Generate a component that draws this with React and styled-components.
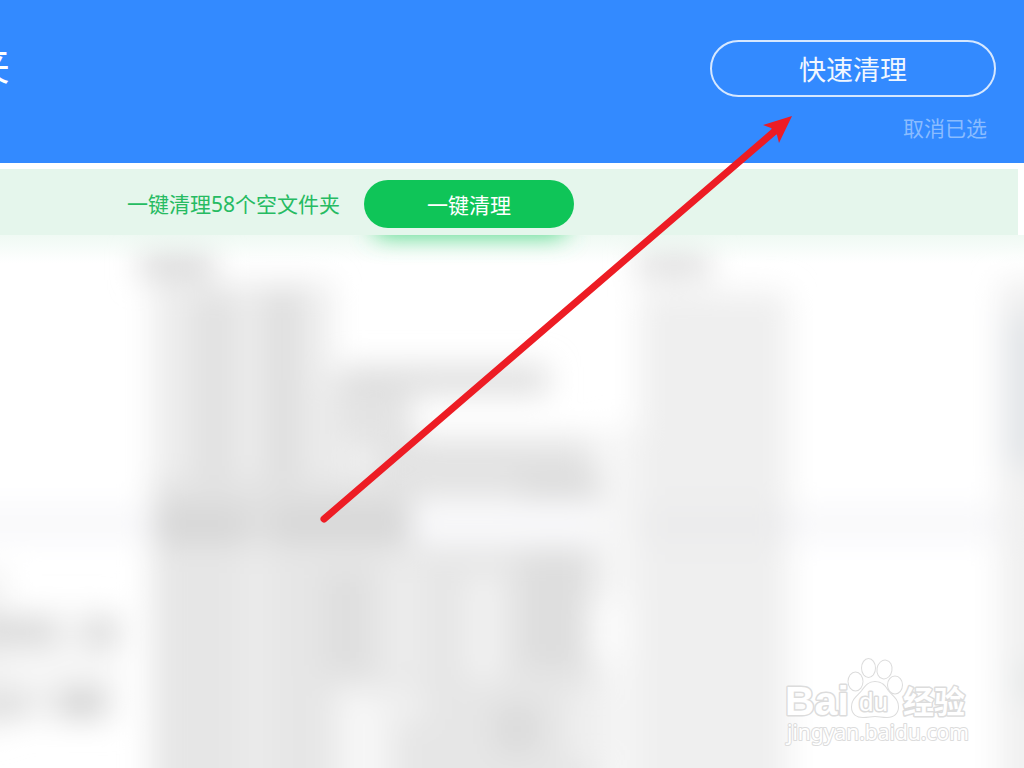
import React from "react";
import styled, { createGlobalStyle } from "styled-components";

const GlobalStyle = createGlobalStyle`
  * {
    box-sizing: border-box;
  }

  body {
    margin: 0;
    background: #fff;
    font-family: "Noto Sans", "Noto Sans CJK SC", sans-serif;
    font-weight: 400;
  }
`;

const Page = styled.div`
  position: relative;
  display: flex;
  flex-direction: column;
  min-height: 100vh;
  overflow: hidden;
`;

const Header = styled.header`
  display: flex;
  justify-content: space-between;
  align-items: flex-start;
  height: 163px;
  padding: 40px 28px 0 0;
  background: #338aff;
  color: #fff;
`;

const Title = styled.h1`
  display: flex;
  justify-content: flex-end;
  width: 10px;
  margin: 0;
  overflow: hidden;
  font-size: 40px;
  font-weight: 400;
  line-height: 50px;
`;

const Actions = styled.div`
  display: flex;
  flex-direction: column;
  align-items: flex-end;
  gap: 16px;
`;

const QuickCleanButton = styled.button`
  width: 286px;
  height: 57px;
  padding: 0;
  border: 2px solid rgba(255, 255, 255, 0.8);
  border-radius: 29px;
  background: transparent;
  color: #f1f7ff;
  font: inherit;
  font-size: 27px;
  cursor: pointer;
`;

const CancelButton = styled.button`
  margin-right: 9px;
  padding: 0;
  border: 0;
  background: transparent;
  color: #8abcff;
  font: inherit;
  font-size: 21px;
  line-height: 30px;
  cursor: pointer;
`;

const Notice = styled.section`
  display: flex;
  align-items: center;
  gap: 24px;
  height: 66px;
  margin: 6px 6px 0 0;
  padding: 3px 24px 0 127px;
  background: #e5f6ec;
`;

const NoticeText = styled.p`
  margin: 0;
  color: #26bb62;
  font-size: 21px;
  line-height: 30px;
`;

const CleanButton = styled.button`
  width: 210px;
  height: 48px;
  padding: 0;
  border: 0;
  border-radius: 24px;
  background: #0fc558;
  color: #fff;
  font: inherit;
  font-size: 21px;
  cursor: pointer;
`;

const List = styled.main`
  display: flex;
  flex: 1;
  min-height: 533px;
`;

const Smear = styled.svg`
  flex: 1;
  min-width: 0;
`;

const Arrow = styled.svg`
  position: absolute;
  top: 116px;
  left: 318px;
  pointer-events: none;
`;

const Watermark = styled.svg`
  position: absolute;
  right: 50px;
  bottom: 16px;
  pointer-events: none;
`;

// x, y, width, height, fill
const blocks = [
  [-60, 508, 1080, 32, "#f8f8fa"],
  [140, 248, 74, 32, "#dedede"],
  [638, 248, 72, 32, "#e2e2e2"],
  [152, 282, 180, 218, "#ededed"],
  [192, 294, 44, 220, "#e1e1e1"],
  [264, 290, 36, 220, "#dedede"],
  [300, 380, 60, 130, "#ebebeb"],
  [340, 366, 208, 28, "#dedede"],
  [340, 392, 72, 52, "#e3e3e3"],
  [370, 438, 224, 62, "#e3e3e3"],
  [520, 476, 84, 24, "#d9d9d9"],
  [152, 480, 260, 70, "#e2e2e2"],
  [600, 430, 44, 400, "#f5f5f5"],
  [156, 508, 90, 34, "#d6d6d6"],
  [270, 506, 142, 36, "#d7d7d7"],
  [152, 545, 446, 300, "#e6e6e6"],
  [244, 550, 24, 300, "#ececec"],
  [322, 570, 48, 106, "#dfdfdf"],
  [386, 560, 36, 120, "#ececec"],
  [466, 576, 36, 104, "#f1f1f1"],
  [520, 550, 66, 120, "#dedede"],
  [590, 600, 36, 60, "#fcfcfc"],
  [336, 690, 56, 150, "#f6f6f6"],
  [380, 690, 44, 30, "#f1f1f1"],
  [494, 704, 46, 50, "#dcdcdc"],
  [570, 690, 40, 70, "#f0f0f0"],
  [640, 292, 148, 540, "#efefef"],
  [640, 508, 148, 34, "#ebebec"],
  [1000, 280, 80, 560, "#f0f0f0"],
  [1004, 316, 80, 150, "#e3e6e9"],
  [1016, 668, 50, 26, "#e3e7e7"],
  [-60, 570, 66, 160, "#f2f2f2"],
  [0, 610, 120, 110, "#f7f7f7"],
  [-30, 618, 88, 28, "#d8d8d8"],
  [82, 618, 38, 28, "#dadada"],
  [-30, 690, 64, 28, "#dedede"],
  [56, 688, 50, 30, "#d2d2d2"]
];

const BlurredList = () => (
  <Smear
    viewBox="0 235 1024 533"
    preserveAspectRatio="xMinYMin slice"
    aria-hidden="true"
  >
    <defs>
      <filter
        id="smear"
        filterUnits="userSpaceOnUse"
        x="-80"
        y="180"
        width="1200"
        height="700"
      >
        <feGaussianBlur stdDeviation="15" />
      </filter>
      <filter
        id="glow"
        filterUnits="userSpaceOnUse"
        x="300"
        y="160"
        width="340"
        height="140"
      >
        <feGaussianBlur stdDeviation="12" />
      </filter>
      <linearGradient id="tint" x1="0" y1="0" x2="0" y2="1">
        <stop offset="0" stopColor="#e5f6ec" stopOpacity="0.6" />
        <stop offset="1" stopColor="#e5f6ec" stopOpacity="0" />
      </linearGradient>
    </defs>
    <g filter="url(#smear)">
      {blocks.map(([x, y, width, height, fill]) => (
        <rect
          key={`${x}-${y}`}
          x={x}
          y={y}
          width={width}
          height={height}
          fill={fill}
        />
      ))}
    </g>
    <rect x="0" y="235" width="1024" height="28" fill="url(#tint)" />
    <rect
      x="376"
      y="196"
      width="188"
      height="40"
      fill="#4fd886"
      filter="url(#glow)"
    />
  </Smear>
);

const Logo = () => (
  <Watermark width="192" height="96" viewBox="782 656 192 96">
    <g
      fill="#fff"
      stroke="#dcdcdc"
      strokeWidth="2"
      strokeLinejoin="round"
      paintOrder="stroke"
    >
      <text
        x="785"
        y="715"
        fontFamily="Liberation Sans, sans-serif"
        fontWeight="700"
        fontSize="41"
        strokeWidth="3"
      >
        Bai
      </text>
      <ellipse cx="855.5" cy="681.5" rx="7" ry="9" />
      <ellipse cx="868.5" cy="668" rx="6.5" ry="9" />
      <ellipse
        cx="884.5"
        cy="669.5"
        rx="7"
        ry="9"
        transform="rotate(10 884.5 669.5)"
      />
      <ellipse cx="895" cy="685" rx="7" ry="8.5" />
      <path d="M875 682c-7 0-10 5-13 9-4 5-10 8-10 16 0 7 5 10 11 10 5 0 8-1 12-1s7 1 12 1c7 0 11-4 11-10 0-8-6-11-10-16-3-5-6-9-13-9z" />
      <text
        x="859"
        y="711"
        fontFamily="Liberation Sans, sans-serif"
        fontWeight="400"
        fontSize="26"
        strokeWidth="3"
      >
        du
      </text>
      <text
        x="903"
        y="713"
        fontFamily="Noto Sans CJK SC, sans-serif"
        fontWeight="700"
        fontSize="31"
        strokeWidth="3"
      >
        经验
      </text>
      <text
        x="787"
        y="740"
        fontFamily="Noto Sans, sans-serif"
        fontWeight="400"
        fontSize="21"
      >
        jingyan.baidu.com
      </text>
    </g>
  </Watermark>
);

const App = () => (
  <Page>
    <GlobalStyle />
    <Header>
      <Title>夹</Title>
      <Actions>
        <QuickCleanButton type="button">快速清理</QuickCleanButton>
        <CancelButton type="button">取消已选</CancelButton>
      </Actions>
    </Header>
    <Notice>
      <NoticeText>一键清理58个空文件夹</NoticeText>
      <CleanButton type="button">一键清理</CleanButton>
    </Notice>
    <List>
      <BlurredList />
    </List>
    <Arrow width="480" height="410" viewBox="318 116 480 410">
      <path
        d="M324 519 776 130"
        stroke="#ed1c24"
        strokeWidth="7"
        strokeLinecap="round"
      />
      <path d="M792 116 763 125 771 128 777 135 779 143z" fill="#ed1c24" />
    </Arrow>
    <Logo />
  </Page>
);

export default App;
